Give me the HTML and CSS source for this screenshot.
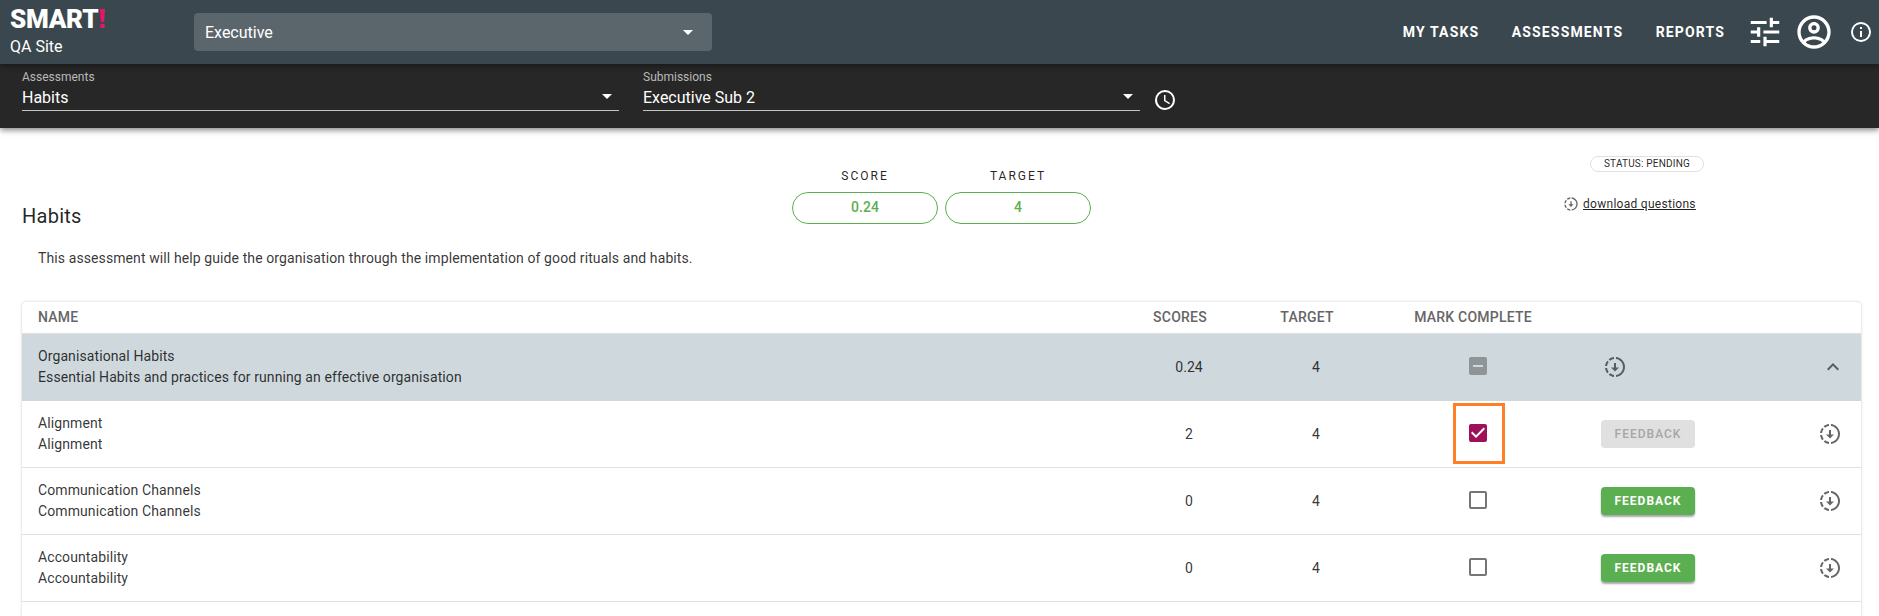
FILE: index.html
```html
<!DOCTYPE html>
<html lang="en">
<head>
<meta charset="utf-8">
<title>SMART! QA Site</title>
<link rel="stylesheet" href="styles.css">
</head>
<body>
<svg class="sprite" width="0" height="0">
  <symbol id="download" viewBox="0 0 24 24"><path d="M13,2.03V2.05L13,4.05C17.39,4.59 20.5,8.58 19.96,12.97C19.5,16.61 16.64,19.5 13,19.93V21.93C18.5,21.38 22.5,16.5 21.95,11C21.5,6.25 17.73,2.5 13,2.03M11,2.06C9.05,2.25 7.19,3 5.67,4.26L7.1,5.74C8.22,4.84 9.57,4.26 11,4.06V2.06M4.26,5.67C3,7.19 2.25,9.04 2.05,11H4.05C4.24,9.58 4.8,8.23 5.69,7.1L4.26,5.67M2.06,13C2.26,14.96 3.03,16.81 4.27,18.33L5.69,16.9C4.81,15.77 4.24,14.42 4.06,13H2.06M7.1,18.37L5.67,19.74C7.18,21 9.04,21.79 11,22V20C9.58,19.82 8.23,19.25 7.1,18.37M12,16.5L16,12.5H13V8H11V12.5H8L12,16.5Z"/></symbol>
  <symbol id="caret" viewBox="0 0 24 24"><path d="M7,10L12,15L17,10H7Z"/></symbol>
  <symbol id="box" viewBox="0 0 24 24"><path d="M19,3H5C3.89,3 3,3.89 3,5V19A2,2 0 0,0 5,21H19A2,2 0 0,0 21,19V5C21,3.89 20.1,3 19,3M19,5V19H5V5H19Z"/></symbol>
</svg>

<header class="topbar">
  <div class="brand">
    <div class="logo">SMART<span class="bang">!</span></div>
    <div class="site">QA Site</div>
  </div>
  <div class="org-select"><span>Executive</span><svg class="icon"><use href="#caret"/></svg></div>
  <nav class="nav">
    <a class="nav-tasks">MY TASKS</a><a class="nav-assess">ASSESSMENTS</a><a class="nav-reports">REPORTS</a>
    <svg class="tune" viewBox="0 0 24 24"><path d="M3,17V19H9V17H3M3,5V7H13V5H3M13,21V19H21V17H13V15H11V21H13M7,9V11H3V13H7V15H9V9H7M21,13V11H11V13H21M15,9H17V7H21V5H17V3H15V9Z"/></svg>
    <svg class="account" viewBox="0 0 24 24"><path d="M12,2A10,10 0 0,0 2,12A10,10 0 0,0 12,22A10,10 0 0,0 22,12A10,10 0 0,0 12,2M7.07,18.28C7.5,17.38 10.12,16.5 12,16.5C13.88,16.5 16.5,17.38 16.93,18.28C15.57,19.36 13.86,20 12,20C10.14,20 8.43,19.36 7.07,18.28M18.36,16.83C16.93,15.09 13.46,14.5 12,14.5C10.54,14.5 7.07,15.09 5.64,16.83C4.62,15.5 4,13.82 4,12C4,7.59 7.59,4 12,4C16.41,4 20,7.59 20,12C20,13.82 19.38,15.5 18.36,16.83M12,6C10.06,6 8.5,7.56 8.5,9.5C8.5,11.44 10.06,13 12,13C13.94,13 15.5,11.44 15.5,9.5C15.5,7.56 13.94,6 12,6M12,11A1.5,1.5 0 0,1 10.5,9.5A1.5,1.5 0 0,1 12,8A1.5,1.5 0 0,1 13.5,9.5A1.5,1.5 0 0,1 12,11Z"/></svg>
    <svg class="icon info" viewBox="0 0 24 24"><path d="M11,9H13V7H11M12,20C7.59,20 4,16.41 4,12C4,7.59 7.59,4 12,4C16.41,4 20,7.59 20,12C20,16.41 16.41,20 12,20M12,2A10,10 0 0,0 2,12A10,10 0 0,0 12,22A10,10 0 0,0 22,12A10,10 0 0,0 12,2M11,17H13V11H11V17Z"/></svg>
  </nav>
</header>

<section class="filters">
  <div class="field field-assess"><label>Assessments</label><div class="value"><span>Habits</span><svg class="icon"><use href="#caret"/></svg></div></div>
  <div class="field field-sub"><label>Submissions</label><div class="value"><span>Executive Sub 2</span><svg class="icon"><use href="#caret"/></svg></div></div>
  <svg class="icon clock" viewBox="0 0 24 24"><path d="M12,20A8,8 0 0,0 20,12A8,8 0 0,0 12,4A8,8 0 0,0 4,12A8,8 0 0,0 12,20M12,2A10,10 0 0,1 22,12A10,10 0 0,1 12,22C6.47,22 2,17.5 2,12A10,10 0 0,1 12,2M12.5,7V12.25L17,14.92L16.25,16.15L11,13V7H12.5Z"/></svg>
</section>

<main>
  <section class="summary">
    <h1>Habits</h1>
    <div class="scores">
      <div class="score"><span class="score-label">SCORE</span><span class="pill">0.24</span></div>
      <div class="score"><span class="score-label">TARGET</span><span class="pill">4</span></div>
    </div>
    <div class="status-area">
      <span class="status">STATUS: PENDING</span>
      <a class="download"><svg><use href="#download"/></svg><span>download questions</span></a>
    </div>
  </section>
  <p class="description">This assessment will help guide the organisation through the implementation of good rituals and habits.</p>

  <div class="table">
    <div class="row head"><div>NAME</div><div class="c">SCORES</div><div class="c">TARGET</div><div class="c c-mark">MARK COMPLETE</div><div></div><div></div></div>
    <div class="row group">
      <div class="name">Organisational Habits<br>Essential Habits and practices for running an effective organisation</div>
      <div class="num">0.24</div><div class="num">4</div>
      <div class="mark"><svg class="icon some" viewBox="0 0 24 24"><path d="M17,13H7V11H17M19,3H5C3.89,3 3,3.89 3,5V19A2,2 0 0,0 5,21H19A2,2 0 0,0 21,19V5C21,3.89 20.1,3 19,3Z"/></svg></div>
      <div class="action"><svg class="icon group-dl"><use href="#download"/></svg></div>
      <div class="end"><svg class="icon chevron" viewBox="0 0 24 24"><path d="M7.41,15.41L12,10.83L16.59,15.41L18,14L12,8L6,14L7.41,15.41Z"/></svg></div>
    </div>
    <div class="row">
      <div class="name">Alignment<br>Alignment</div><div class="num">2</div><div class="num">4</div>
      <div class="mark"><svg class="icon checked" viewBox="0 0 24 24"><path d="M10,17L5,12L6.41,10.58L10,14.17L17.59,6.58L19,8M19,3H5C3.89,3 3,3.89 3,5V19A2,2 0 0,0 5,21H19A2,2 0 0,0 21,19V5C21,3.89 20.1,3 19,3Z"/></svg><i class="highlight"></i></div>
      <div class="action"><button class="btn disabled">FEEDBACK</button></div><div class="end"><svg class="icon"><use href="#download"/></svg></div>
    </div>
    <div class="row">
      <div class="name">Communication Channels<br>Communication Channels</div><div class="num">0</div><div class="num">4</div>
      <div class="mark"><svg class="icon"><use href="#box"/></svg></div>
      <div class="action"><button class="btn">FEEDBACK</button></div><div class="end"><svg class="icon"><use href="#download"/></svg></div>
    </div>
    <div class="row">
      <div class="name">Accountability<br>Accountability</div><div class="num">0</div><div class="num">4</div>
      <div class="mark"><svg class="icon"><use href="#box"/></svg></div>
      <div class="action"><button class="btn">FEEDBACK</button></div><div class="end"><svg class="icon"><use href="#download"/></svg></div>
    </div>
  </div>
</main>
</body>
</html>
```
FILE: styles.css
```css
* { box-sizing: border-box; }
html { height: 100%; overflow: hidden; }
body { margin: 0; height: 100%; overflow: hidden; display: flex; flex-direction: column; background: #fff; color: rgba(0,0,0,.87); font-family: Roboto, "Liberation Sans", sans-serif; }
.sprite { position: absolute; }
svg { fill: currentColor; display: block; flex: none; }
.icon { width: 24px; height: 24px; }

.topbar { position: relative; z-index: 2; flex: none; height: 64px; display: flex; background: #3a474e; color: #fff; box-shadow: 0 2px 6px rgba(0,0,0,.4); }
.brand { width: 194px; padding: 6px 0 0 10px; }
.logo { font-size: 26px; line-height: 27px; font-weight: 900; letter-spacing: -.3px; }
.bang { color: #e5156b; }
.site { font-size: 16px; line-height: 28px; }
.org-select { width: 518px; height: 38px; margin-top: 13px; padding: 0 12px 0 11px; border-radius: 4px; background: #5b666c; display: flex; align-items: center; justify-content: space-between; font-size: 16px; }
.nav { margin-left: auto; display: flex; align-items: center; font-size: 14px; font-weight: 700; letter-spacing: 1.15px; padding-right: 6px; }
.nav-tasks, .nav-assess { margin-right: 32.5px; }
.nav-reports { margin-right: 21px; }
.tune { width: 38px; height: 38px; }
.account { width: 40px; height: 40px; margin-left: 10px; }
.info { margin-left: 15px; }

.filters { position: relative; z-index: 1; flex: none; height: 64px; padding-left: 22px; display: flex; background: #272727; color: #fff; box-shadow: 0 2px 6px rgba(0,0,0,.5); }
.field { height: 47px; padding-top: 6px; border-bottom: 1px solid #c4c4c4; }
.field label { display: block; font-size: 12px; line-height: 14px; color: #b9b9b9; }
.field .value { display: flex; align-items: center; justify-content: space-between; height: 26px; font-size: 16px; }
.field .icon { margin-bottom: 2px; }
.field-assess { width: 597px; margin-right: 24px; }
.field-sub { width: 497px; margin-right: 12.5px; }
.clock { margin-top: 24px; }

main { flex: 1; min-height: 0; display: flex; flex-direction: column; padding: 0 18px 0 22px; }
.summary { flex: none; height: 114px; display: flex; }
h1 { width: 770px; margin: 0; padding-top: 76px; font-size: 20px; line-height: 24px; font-weight: 400; letter-spacing: .25px; }
.scores { display: flex; gap: 7px; padding-top: 40px; }
.score { width: 146px; text-align: center; }
.score-label { display: block; font-size: 12px; line-height: 16px; letter-spacing: 2px; margin-bottom: 8px; }
.pill { display: block; height: 32px; line-height: 29px; border: 1px solid #5caf50; border-radius: 16px; color: #5caf50; font-size: 14px; font-weight: 500; }
.status-area { margin-left: auto; width: 298px; padding-top: 28px; }
.status { display: block; width: 114px; height: 16px; margin-left: 27px; border: 1px solid #e0e0e0; border-radius: 8px; font-size: 10px; line-height: 14px; text-align: center; letter-spacing: .2px; }
.download { display: flex; align-items: center; gap: 4px; height: 20px; margin-top: 22px; font-size: 12px; letter-spacing: .28px; }
.download svg { width: 16px; height: 16px; color: #666; }
.download span { text-decoration: underline; }
.description { flex: none; margin: 5px 0 0 16px; height: 55px; font-size: 14px; line-height: 22px; letter-spacing: .1px; color: rgba(0,0,0,.8); }

.table { flex: 1; min-height: 0; border-radius: 4px 4px 0 0; box-shadow: 0 0 3px rgba(0,0,0,.22); font-size: 14px; color: rgba(0,0,0,.8); }
.row { height: 67px; display: grid; grid-template-columns: 1100px 134px 120px 204px 193px 1fr; align-items: center; border-bottom: 1px solid #e0e0e0; }
.head { height: 32px; padding-bottom: 1px; color: #666; font-weight: 500; letter-spacing: .22px; }
.head > div:first-child, .name { padding-left: 16px; }
.name { line-height: 21px; letter-spacing: .1px; }
.group { background: #cfd8dc; border-bottom-color: #cfd8dc; }
.c { text-align: center; padding-right: 18px; }
.c-mark { padding-right: 10px; }
.num { text-align: center; }
.mark { position: relative; display: flex; justify-content: center; padding-bottom: 2px; color: #757575; }
.some { color: #8f9497; }
.checked { color: #9f1157; }
.highlight { position: absolute; left: 77px; top: -18px; width: 52px; height: 61px; border: 3px solid #ff7f27; }
.action { padding-left: 21px; }
.btn { display: block; width: 94px; height: 28px; padding: 0; border: 0; border-radius: 4px; background: #5caf50; color: #fff; font: 700 12px Roboto, sans-serif; letter-spacing: 1px; box-shadow: 0 2px 2px rgba(0,0,0,.35); }
.disabled { background: #e0e0e0; color: #a6a6a6; font-weight: 500; box-shadow: none; }
.end { display: flex; justify-content: flex-end; padding-right: 19px; color: #666; }
.group-dl { margin-left: 2px; }
.chevron { margin-right: -3px; }
.group-dl, .chevron { color: #555d61; }
```
